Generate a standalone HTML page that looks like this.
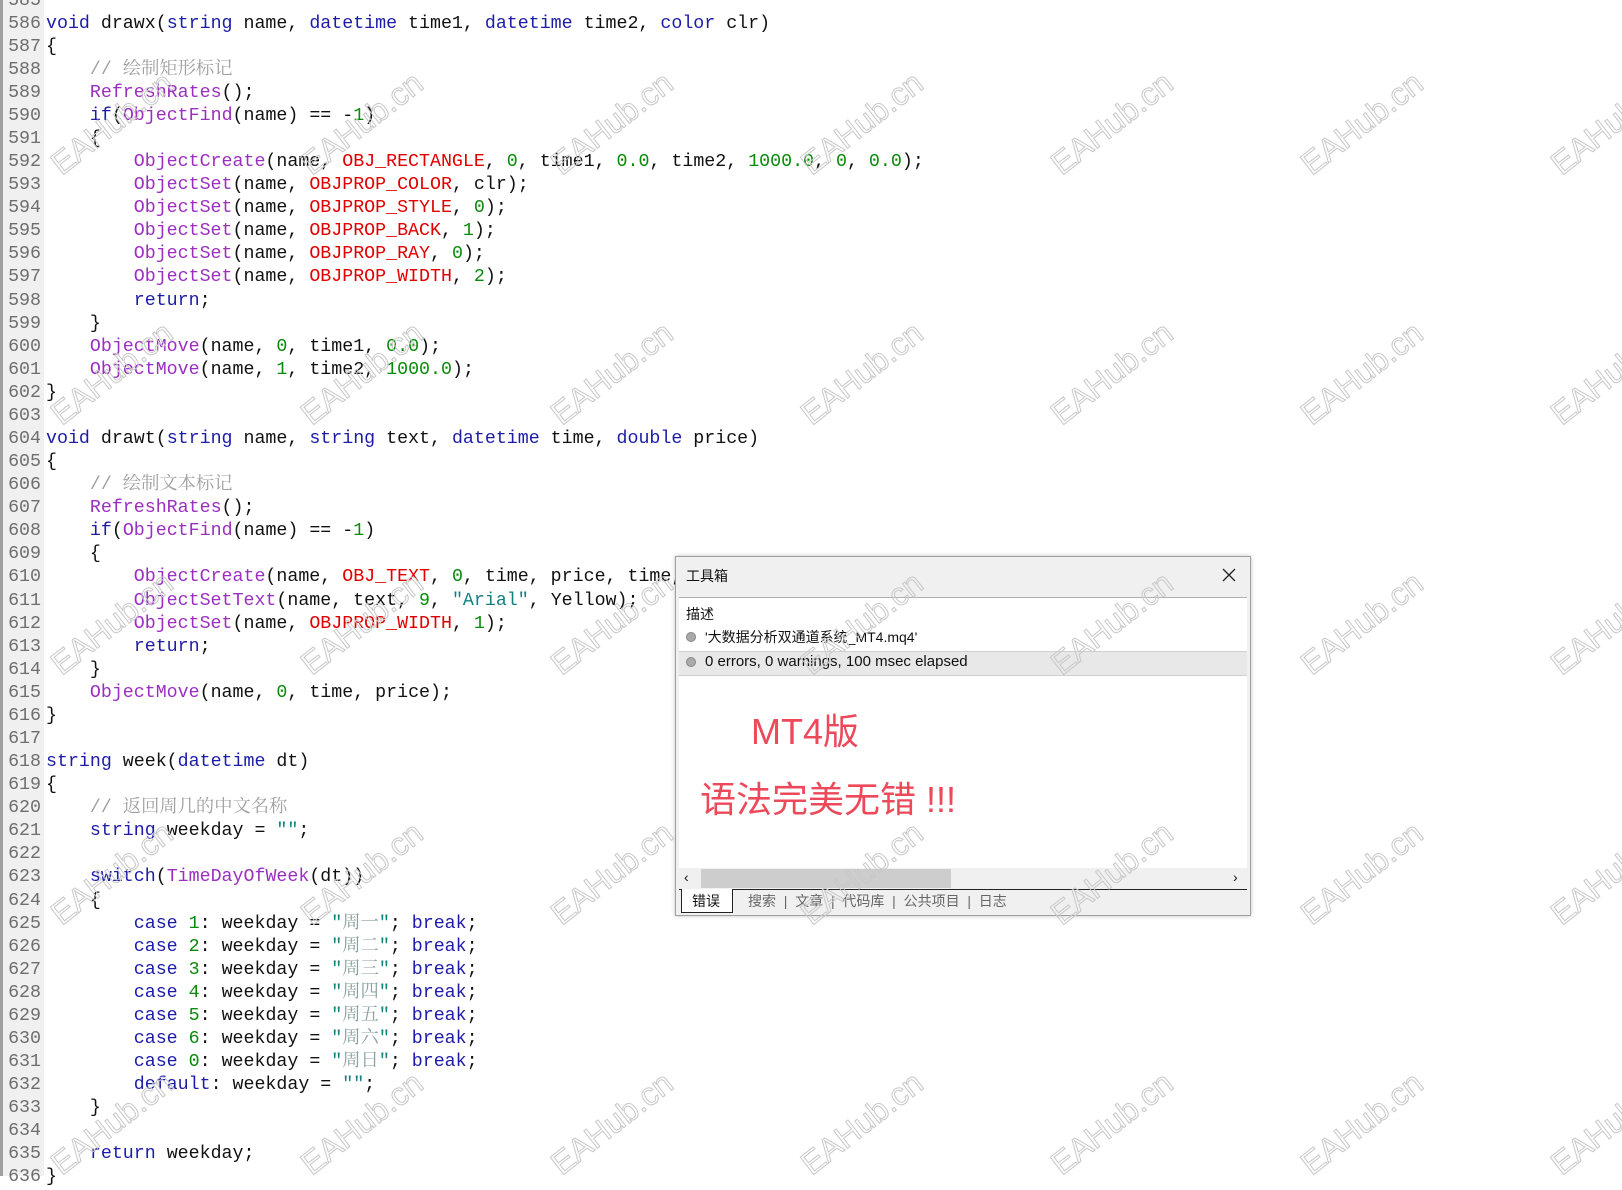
<!DOCTYPE html>
<html><head><meta charset="utf-8"><style>
html,body{margin:0;padding:0;width:1622px;height:1176px;overflow:hidden;background:#fff;}
#gut{position:absolute;left:0;top:0;width:44px;height:1176px;background:#f0f0f0;border-left:3px solid #a0a0a0;box-sizing:border-box;}
#code{position:absolute;left:0;top:-10.5px;font-family:"Liberation Mono","Noto Sans CJK SC",monospace;font-size:18.3px;line-height:23.08px;color:#111;}
.l{height:23.08px;white-space:pre;overflow:hidden;}
.ln{display:inline-block;width:41px;text-align:right;color:#6e6e6e;margin-right:5px;}
.k{color:#1c1ca8}.f{color:#9b2fc0}.c{color:#e00000}.n{color:#0a8a0a}.s{color:#138080}
.m{color:#a0a0a0;font-family:"Liberation Mono","Noto Serif CJK SC",monospace;line-height:1px}
.cj{font-family:"Noto Serif CJK SC",serif;color:#8aa0a0;line-height:1px}
.wm{position:absolute;font-family:"Liberation Sans",sans-serif;font-size:32px;color:transparent;-webkit-text-stroke:1px #c8c8c8;transform:rotate(-38deg);white-space:nowrap;z-index:5;}
#dlg{position:absolute;left:675px;top:556px;width:576px;height:360px;background:#f0f0f0;border:1px solid #a0a0a0;box-shadow:0 0 4px rgba(0,0,0,.25);z-index:3;font-family:"Liberation Sans","Noto Sans CJK SC",sans-serif;box-sizing:border-box;}
.t{position:absolute;font-size:14px;color:#111;white-space:nowrap;}
</style></head><body>
<div id="gut"></div>
<div id="code">
<div class="l"><span class="ln">585</span></div>
<div class="l"><span class="ln">586</span><span class="k">void</span> drawx(<span class="k">string</span> name, <span class="k">datetime</span> time1, <span class="k">datetime</span> time2, <span class="k">color</span> clr)</div>
<div class="l"><span class="ln">587</span>{</div>
<div class="l"><span class="ln">588</span>    <span class="m">// 绘制矩形标记</span></div>
<div class="l"><span class="ln">589</span>    <span class="f">RefreshRates</span>();</div>
<div class="l"><span class="ln">590</span>    <span class="k">if</span>(<span class="f">ObjectFind</span>(name) == -<span class="n">1</span>)</div>
<div class="l"><span class="ln">591</span>    {</div>
<div class="l"><span class="ln">592</span>        <span class="f">ObjectCreate</span>(name, <span class="c">OBJ_RECTANGLE</span>, <span class="n">0</span>, time1, <span class="n">0.0</span>, time2, <span class="n">1000.0</span>, <span class="n">0</span>, <span class="n">0.0</span>);</div>
<div class="l"><span class="ln">593</span>        <span class="f">ObjectSet</span>(name, <span class="c">OBJPROP_COLOR</span>, clr);</div>
<div class="l"><span class="ln">594</span>        <span class="f">ObjectSet</span>(name, <span class="c">OBJPROP_STYLE</span>, <span class="n">0</span>);</div>
<div class="l"><span class="ln">595</span>        <span class="f">ObjectSet</span>(name, <span class="c">OBJPROP_BACK</span>, <span class="n">1</span>);</div>
<div class="l"><span class="ln">596</span>        <span class="f">ObjectSet</span>(name, <span class="c">OBJPROP_RAY</span>, <span class="n">0</span>);</div>
<div class="l"><span class="ln">597</span>        <span class="f">ObjectSet</span>(name, <span class="c">OBJPROP_WIDTH</span>, <span class="n">2</span>);</div>
<div class="l"><span class="ln">598</span>        <span class="k">return</span>;</div>
<div class="l"><span class="ln">599</span>    }</div>
<div class="l"><span class="ln">600</span>    <span class="f">ObjectMove</span>(name, <span class="n">0</span>, time1, <span class="n">0.0</span>);</div>
<div class="l"><span class="ln">601</span>    <span class="f">ObjectMove</span>(name, <span class="n">1</span>, time2, <span class="n">1000.0</span>);</div>
<div class="l"><span class="ln">602</span>}</div>
<div class="l"><span class="ln">603</span></div>
<div class="l"><span class="ln">604</span><span class="k">void</span> drawt(<span class="k">string</span> name, <span class="k">string</span> text, <span class="k">datetime</span> time, <span class="k">double</span> price)</div>
<div class="l"><span class="ln">605</span>{</div>
<div class="l"><span class="ln">606</span>    <span class="m">// 绘制文本标记</span></div>
<div class="l"><span class="ln">607</span>    <span class="f">RefreshRates</span>();</div>
<div class="l"><span class="ln">608</span>    <span class="k">if</span>(<span class="f">ObjectFind</span>(name) == -<span class="n">1</span>)</div>
<div class="l"><span class="ln">609</span>    {</div>
<div class="l"><span class="ln">610</span>        <span class="f">ObjectCreate</span>(name, <span class="c">OBJ_TEXT</span>, <span class="n">0</span>, time, price, time, price);</div>
<div class="l"><span class="ln">611</span>        <span class="f">ObjectSetText</span>(name, text, <span class="n">9</span>, <span class="s">"Arial"</span>, Yellow);</div>
<div class="l"><span class="ln">612</span>        <span class="f">ObjectSet</span>(name, <span class="c">OBJPROP_WIDTH</span>, <span class="n">1</span>);</div>
<div class="l"><span class="ln">613</span>        <span class="k">return</span>;</div>
<div class="l"><span class="ln">614</span>    }</div>
<div class="l"><span class="ln">615</span>    <span class="f">ObjectMove</span>(name, <span class="n">0</span>, time, price);</div>
<div class="l"><span class="ln">616</span>}</div>
<div class="l"><span class="ln">617</span></div>
<div class="l"><span class="ln">618</span><span class="k">string</span> week(<span class="k">datetime</span> dt)</div>
<div class="l"><span class="ln">619</span>{</div>
<div class="l"><span class="ln">620</span>    <span class="m">// 返回周几的中文名称</span></div>
<div class="l"><span class="ln">621</span>    <span class="k">string</span> weekday = <span class="s">""</span>;</div>
<div class="l"><span class="ln">622</span></div>
<div class="l"><span class="ln">623</span>    <span class="k">switch</span>(<span class="f">TimeDayOfWeek</span>(dt))</div>
<div class="l"><span class="ln">624</span>    {</div>
<div class="l"><span class="ln">625</span>        <span class="k">case</span> <span class="n">1</span>: weekday = <span class="s">"<span class="cj">周一</span>"</span>; <span class="k">break</span>;</div>
<div class="l"><span class="ln">626</span>        <span class="k">case</span> <span class="n">2</span>: weekday = <span class="s">"<span class="cj">周二</span>"</span>; <span class="k">break</span>;</div>
<div class="l"><span class="ln">627</span>        <span class="k">case</span> <span class="n">3</span>: weekday = <span class="s">"<span class="cj">周三</span>"</span>; <span class="k">break</span>;</div>
<div class="l"><span class="ln">628</span>        <span class="k">case</span> <span class="n">4</span>: weekday = <span class="s">"<span class="cj">周四</span>"</span>; <span class="k">break</span>;</div>
<div class="l"><span class="ln">629</span>        <span class="k">case</span> <span class="n">5</span>: weekday = <span class="s">"<span class="cj">周五</span>"</span>; <span class="k">break</span>;</div>
<div class="l"><span class="ln">630</span>        <span class="k">case</span> <span class="n">6</span>: weekday = <span class="s">"<span class="cj">周六</span>"</span>; <span class="k">break</span>;</div>
<div class="l"><span class="ln">631</span>        <span class="k">case</span> <span class="n">0</span>: weekday = <span class="s">"<span class="cj">周日</span>"</span>; <span class="k">break</span>;</div>
<div class="l"><span class="ln">632</span>        <span class="k">default</span>: weekday = <span class="s">""</span>;</div>
<div class="l"><span class="ln">633</span>    }</div>
<div class="l"><span class="ln">634</span></div>
<div class="l"><span class="ln">635</span>    <span class="k">return</span> weekday;</div>
<div class="l"><span class="ln">636</span>}</div>
</div>

<div id="dlg">
  <div class="t" style="left:10px;top:9px;">工具箱</div>
  <svg style="position:absolute;left:546px;top:11px" width="14" height="14"><path d="M1 1L13 13M13 1L1 13" stroke="#222" stroke-width="1.3"/></svg>
  <div style="position:absolute;left:3px;top:40px;width:568px;height:272px;background:#fff;border-top:1px solid #b0b0b0;"></div>
  <div class="t" style="left:10px;top:47px;">描述</div>
  <div style="position:absolute;left:10px;top:75px;width:8px;height:8px;border-radius:50%;background:#aaa;border:1px solid #888;"></div>
  <div class="t" style="left:29px;top:70px;">'大数据分析双通道系统_MT4.mq4'</div>
  <div style="position:absolute;left:3px;top:94px;width:568px;height:23px;background:#e8e8e8;border-top:1px solid #d0d0d0;border-bottom:1px solid #d0d0d0;"></div>
  <div style="position:absolute;left:10px;top:100px;width:8px;height:8px;border-radius:50%;background:#aaa;border:1px solid #888;"></div>
  <div class="t" style="left:29px;top:96px;font-size:15px;">0 errors, 0 warnings, 100 msec elapsed</div>
  <div class="t" style="left:75px;top:146px;font-size:36px;color:#ec4a5a;">MT4版</div>
  <div class="t" style="left:24px;top:214px;font-size:36px;color:#ec4a5a;">语法完美无错 !!!</div>
  <div style="position:absolute;left:3px;top:311px;width:568px;height:20px;background:#f0f0f0;"></div>
  <div style="position:absolute;left:25px;top:312px;width:250px;height:19px;background:#cdcdcd;"></div>
  <div class="t" style="left:8px;top:312px;font-size:14px;">‹</div>
  <div class="t" style="left:557px;top:312px;font-size:14px;">›</div>
  <div style="position:absolute;left:3px;top:332px;width:568px;border-top:1px solid #222;"></div>
  <div style="position:absolute;left:5px;top:332px;width:52px;height:24px;background:#fff;border:1px solid #222;border-top:none;box-sizing:border-box;"></div>
  <div class="t" style="left:16px;top:334px;">错误</div>
  <div class="t" style="left:72px;top:334px;color:#666;">搜索 &nbsp;|&nbsp; 文章 &nbsp;|&nbsp; 代码库 &nbsp;|&nbsp; 公共项目 &nbsp;|&nbsp; 日志</div>
</div>

<div class="wm" style="left:40px;top:105px">EAHub.cn</div>
<div class="wm" style="left:290px;top:105px">EAHub.cn</div>
<div class="wm" style="left:540px;top:105px">EAHub.cn</div>
<div class="wm" style="left:790px;top:105px">EAHub.cn</div>
<div class="wm" style="left:1040px;top:105px">EAHub.cn</div>
<div class="wm" style="left:1290px;top:105px">EAHub.cn</div>
<div class="wm" style="left:1540px;top:105px">EAHub.cn</div>
<div class="wm" style="left:40px;top:355px">EAHub.cn</div>
<div class="wm" style="left:290px;top:355px">EAHub.cn</div>
<div class="wm" style="left:540px;top:355px">EAHub.cn</div>
<div class="wm" style="left:790px;top:355px">EAHub.cn</div>
<div class="wm" style="left:1040px;top:355px">EAHub.cn</div>
<div class="wm" style="left:1290px;top:355px">EAHub.cn</div>
<div class="wm" style="left:1540px;top:355px">EAHub.cn</div>
<div class="wm" style="left:40px;top:605px">EAHub.cn</div>
<div class="wm" style="left:290px;top:605px">EAHub.cn</div>
<div class="wm" style="left:540px;top:605px">EAHub.cn</div>
<div class="wm" style="left:790px;top:605px">EAHub.cn</div>
<div class="wm" style="left:1040px;top:605px">EAHub.cn</div>
<div class="wm" style="left:1290px;top:605px">EAHub.cn</div>
<div class="wm" style="left:1540px;top:605px">EAHub.cn</div>
<div class="wm" style="left:40px;top:855px">EAHub.cn</div>
<div class="wm" style="left:290px;top:855px">EAHub.cn</div>
<div class="wm" style="left:540px;top:855px">EAHub.cn</div>
<div class="wm" style="left:790px;top:855px">EAHub.cn</div>
<div class="wm" style="left:1040px;top:855px">EAHub.cn</div>
<div class="wm" style="left:1290px;top:855px">EAHub.cn</div>
<div class="wm" style="left:1540px;top:855px">EAHub.cn</div>
<div class="wm" style="left:40px;top:1105px">EAHub.cn</div>
<div class="wm" style="left:290px;top:1105px">EAHub.cn</div>
<div class="wm" style="left:540px;top:1105px">EAHub.cn</div>
<div class="wm" style="left:790px;top:1105px">EAHub.cn</div>
<div class="wm" style="left:1040px;top:1105px">EAHub.cn</div>
<div class="wm" style="left:1290px;top:1105px">EAHub.cn</div>
<div class="wm" style="left:1540px;top:1105px">EAHub.cn</div>
</body></html>
